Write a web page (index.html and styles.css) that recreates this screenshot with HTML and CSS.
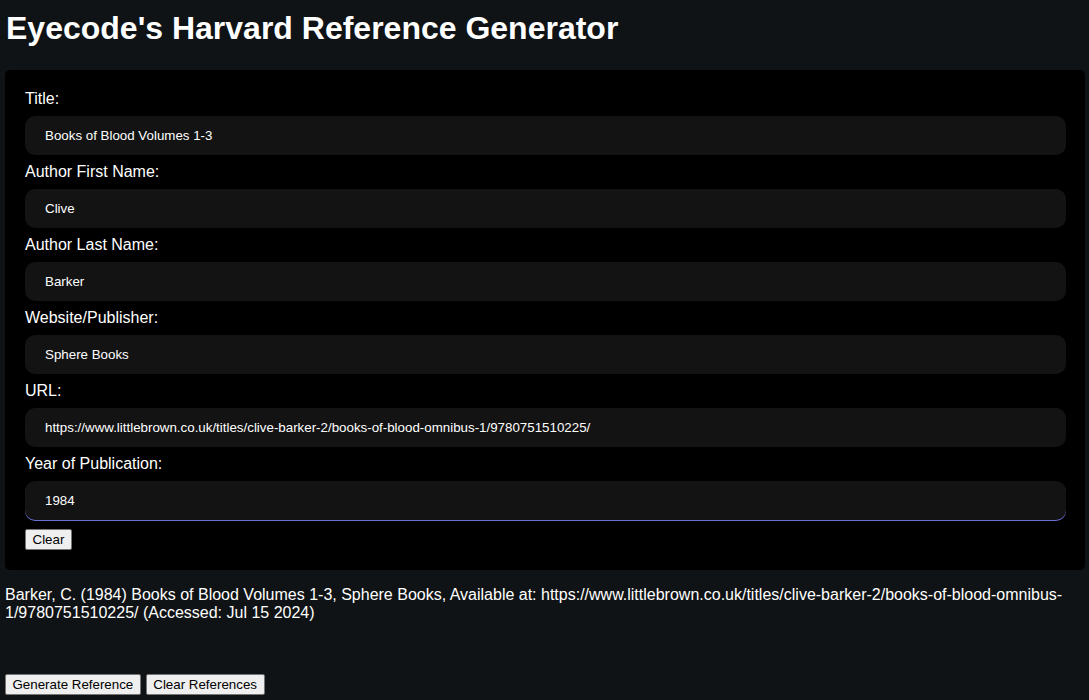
FILE: index.html
```html
<!DOCTYPE html>
<html lang="en">
<head>
<meta charset="utf-8">
<title>Eyecode's Harvard Reference Generator</title>
<link rel="stylesheet" href="styles.css">
</head>
<body>
<h1 class="title">Eyecode's Harvard Reference Generator</h1>
<form class="card">
  <label class="field-label" for="title">Title:</label>
  <input class="field" id="title" type="text" value="Books of Blood Volumes 1-3">
  <label class="field-label" for="first">Author First Name:</label>
  <input class="field" id="first" type="text" value="Clive">
  <label class="field-label" for="last">Author Last Name:</label>
  <input class="field" id="last" type="text" value="Barker">
  <label class="field-label" for="publisher">Website/Publisher:</label>
  <input class="field" id="publisher" type="text" value="Sphere Books">
  <label class="field-label" for="url">URL:</label>
  <input class="field" id="url" type="text" value="https://www.littlebrown.co.uk/titles/clive-barker-2/books-of-blood-omnibus-1/9780751510225/">
  <label class="field-label" for="year">Year of Publication:</label>
  <input class="field field-active" id="year" type="text" value="1984">
  <div class="card-actions">
    <button class="btn" type="button">Clear</button>
  </div>
</form>
<div class="output">
  <p class="reference">Barker, C. (1984) Books of Blood Volumes 1-3, Sphere Books, Available at: https://www.littlebrown.co.uk/titles/clive-barker-2/books-of-blood-omnibus-1/9780751510225/ (Accessed: Jul 15 2024)</p>
</div>
<div class="actions">
  <button class="btn" type="button">Generate Reference</button>
  <button class="btn" type="button">Clear References</button>
</div>
</body>
</html>
```
FILE: styles.css
```css
html, body {
  background: #0f1315;
}
body {
  margin: 0;
  padding: 0 4px 0 5px;
  font-family: "Liberation Sans", Arial, sans-serif;
  color: #ffffff;
}
.title {
  margin: 10px 0 23px 1px;
  font-size: 32px;
  font-weight: bold;
  line-height: 37px;
}
.card {
  display: flex;
  flex-direction: column;
  background: #000000;
  border-radius: 5px;
  padding: 19px 19px 20px 20px;
  margin: 0;
}
.field-label {
  display: block;
  font-size: 16px;
  line-height: 18px;
  padding-top: 1px;
  margin-bottom: 8px;
}
.field {
  box-sizing: border-box;
  height: 39px;
  width: 100%;
  margin: 0 0 7px 0;
  padding: 0 20px;
  border: none;
  border-radius: 10px;
  background: #131313;
  color: #ffffff;
  font-family: "Liberation Sans", Arial, sans-serif;
  font-size: 13.33px;
  outline: none;
}
.field-active {
  box-shadow: 0 1px 0 #6870d0;
  margin-bottom: 9px;
}
.card-actions {
  display: flex;
}
.btn {
  font-family: "Liberation Sans", Arial, sans-serif;
  font-size: 13.33px;
  color: #000000;
  background: #efefef;
  border: 1px solid #767676;
  border-radius: 2px;
  padding: 1px 6.5px;
  height: 21px;
  line-height: 15px;
}
.output {
  margin: 16px 0 52px 0;
}
.reference {
  margin: 0;
  font-size: 16px;
  line-height: 18px;
}
.actions {
  display: flex;
  gap: 5px;
}
```
